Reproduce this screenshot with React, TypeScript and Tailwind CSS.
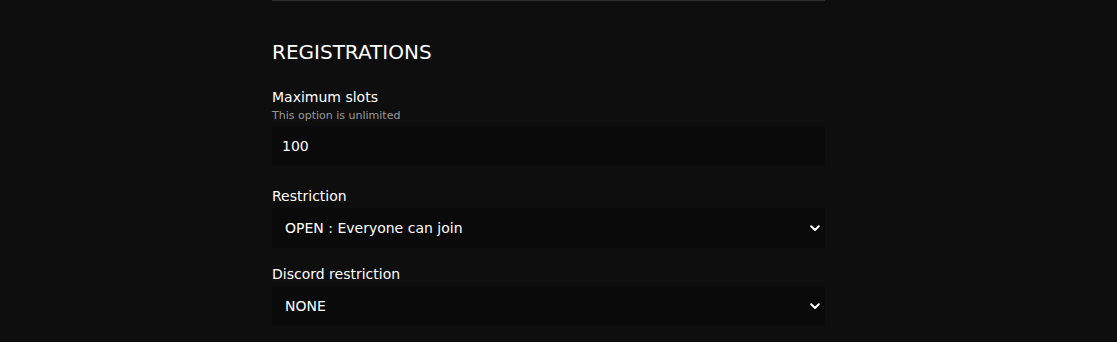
import React from 'react';

const font = { fontFamily: '"DejaVu Sans", "Open Sans", sans-serif' };

const Chevron = () => (
    <svg
        viewBox="0 0 10 10"
        className="pointer-events-none absolute right-[5px] top-1/2 h-[10px] w-[10px] -translate-y-1/2"
        fill="none"
        stroke="white"
        strokeWidth={2}
        strokeLinecap="round"
        strokeLinejoin="round"
    >
        <path d="M1.2 3.2L5 7l3.8-3.8" />
    </svg>
);

type SelectFieldProps = {
    label: string;
    value: string;
    options: string[];
    className?: string;
};

const SelectField = ({ label, value, options, className }: SelectFieldProps) => (
    <div className={`flex flex-col ${className ?? ''}`}>
        <label className="text-[14px] leading-[20px] text-white">{label}</label>
        <div className="relative mt-[2px]">
            <select
                defaultValue={value}
                className="h-[40px] w-full appearance-none bg-[#0a0a0a] pl-[13px] pr-8 text-[14px] text-white outline-none"
                style={font}
            >
                {options.map((option) => (
                    <option key={option} value={option}>
                        {option}
                    </option>
                ))}
            </select>
            <Chevron />
        </div>
    </div>
);

export default function App() {
    return (
        <div className="min-h-[342px] w-full bg-[#0e0e0e]" style={font}>
            <div className="mx-auto w-[553px] -translate-x-[10px]">
                <div className="h-px bg-[#2e2e2e]" />
                <h2 className="mt-[37px] text-[20px] leading-[28px] font-normal text-white">REGISTRATIONS</h2>
                <div className="mt-[21px] flex flex-col">
                    <label className="text-[14px] leading-[20px] text-white">Maximum slots</label>
                    <span className="mt-[1px] text-[11px] leading-[16px] text-[#9a9a9a]">This option is unlimited</span>
                    <input
                        type="text"
                        defaultValue="100"
                        className="mt-[2px] h-[40px] w-full bg-[#0a0a0a] pl-[10px] text-[14px] text-white outline-none"
                        style={font}
                    />
                </div>
                <SelectField
                    className="mt-[20px]"
                    label="Restriction"
                    value="OPEN : Everyone can join"
                    options={['OPEN : Everyone can join', 'CLOSED : Invitation only']}
                />
                <SelectField
                    className="mt-[16px]"
                    label="Discord restriction"
                    value="NONE"
                    options={['NONE', 'MEMBER', 'ROLE']}
                />
            </div>
        </div>
    );
}
